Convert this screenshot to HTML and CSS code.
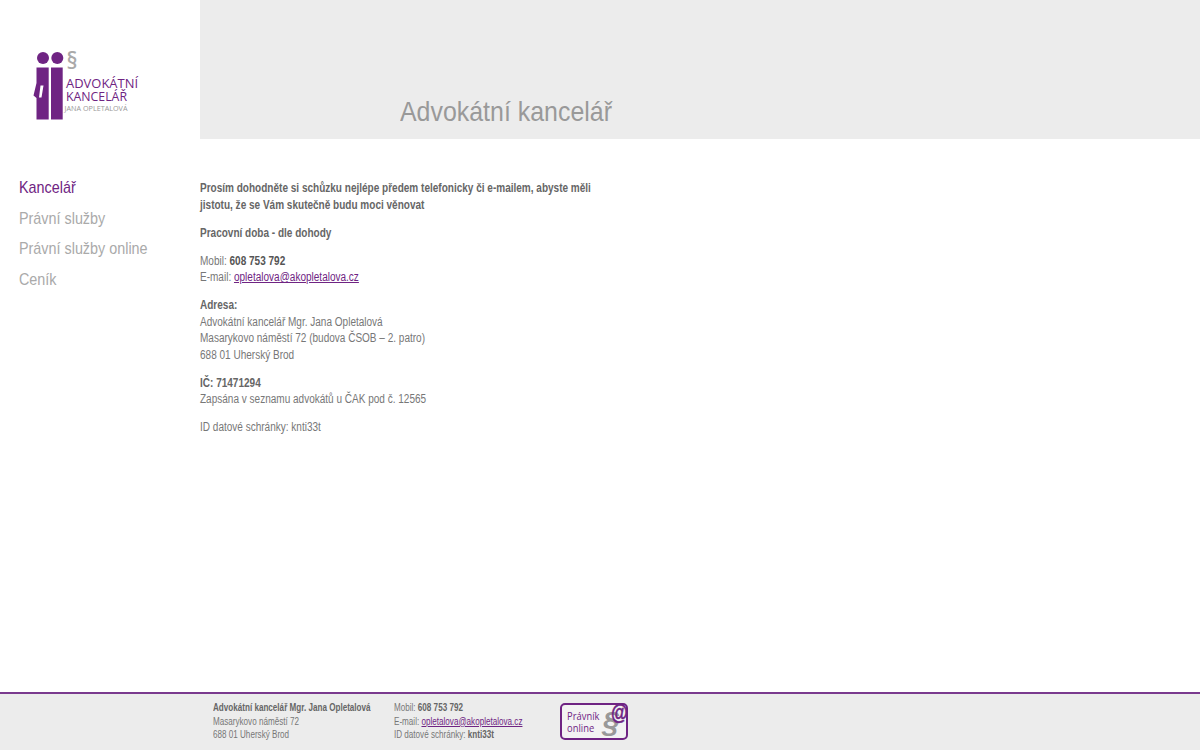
FILE: index.html
```html
<!DOCTYPE html>
<html>
<head>
<meta charset="UTF-8">
<title>Advokátní kancelář</title>
<link rel="stylesheet" href="styles.css">
</head>
<body>
<div class="page">
	<div class="header">
		<div class="logo">
			<svg width="200" height="139" viewBox="0 0 200 139">
				<circle cx="43" cy="58" r="6" fill="#6f2483"/>
				<circle cx="57.3" cy="58" r="6" fill="#6f2483"/>
				<path d="M36.5 67.5H48.7V119.5H36.5V98L33.5 95.5L36.5 83Z" fill="#6f2483"/>
				<path d="M51 67.5H62.7V119.5H51Z" fill="#6f2483"/>
				<path d="M40.5 85.5H43.5L41.5 97.5H39Z" fill="#fff"/>
				<text x="66.5" y="69" class="logo-par" textLength="11" lengthAdjust="spacingAndGlyphs">§</text>
				<text x="66" y="87.5" class="logo-line" textLength="72" lengthAdjust="spacingAndGlyphs">ADVOKÁTNÍ</text>
				<text x="66" y="101" class="logo-line" textLength="61" lengthAdjust="spacingAndGlyphs">KANCELÁŘ</text>
				<text x="64.5" y="111" class="logo-name" textLength="63" lengthAdjust="spacingAndGlyphs">JANA OPLETALOVÁ</text>
			</svg>
		</div>
		<div class="band">
			<h1>Advokátní kancelář</h1>
		</div>
	</div>
	<div class="main">
		<ul class="menu">
			<li><a class="active" href="#">Kancelář</a></li>
			<li><a href="#">Právní služby</a></li>
			<li><a href="#">Právní služby online</a></li>
			<li><a href="#">Ceník</a></li>
		</ul>
		<div class="content">
			<p><b>Prosím dohodněte si schůzku nejlépe předem telefonicky či e-mailem, abyste měli jistotu, že se Vám skutečně budu moci věnovat</b></p>
			<p><b>Pracovní doba - dle dohody</b></p>
			<p>Mobil: <b class="dark">608 753 792</b><br>E-mail: <a href="#">opletalova@akopletalova.cz</a></p>
			<p><b>Adresa:</b><br>Advokátní kancelář Mgr. Jana Opletalová<br>Masarykovo náměstí 72 (budova ČSOB – 2. patro)<br>688 01 Uherský Brod</p>
			<p><b>IČ: 71471294</b><br>Zapsána v seznamu advokátů u ČAK pod č. 12565</p>
			<p>ID datové schránky: knti33t</p>
		</div>
	</div>
	<div class="footer">
		<div class="foot-col foot-addr">
			<b>Advokátní kancelář Mgr. Jana Opletalová</b><br>Masarykovo náměstí 72<br>688 01 Uherský Brod
		</div>
		<div class="foot-col foot-contact">
			Mobil: <b>608 753 792</b><br>E-mail: <a href="#">opletalova@akopletalova.cz</a><br>ID datové schránky: <b>knti33t</b>
		</div>
		<div class="badge">
			<div class="badge-text">Právník<br>online</div>
			<span class="badge-par">§</span>
			<span class="badge-at">@</span>
		</div>
	</div>
</div>
</body>
</html>
```

FILE: styles.css
```css
html, body {
	margin: 0;
	padding: 0;
}

body {
	font-family: "Liberation Sans", Arial, sans-serif;
	font-size: 12px;
	color: #777;
	background: #fff;
}

.page {
	display: flex;
	flex-direction: column;
	height: 750px;
	overflow: hidden;
}

.header {
	display: flex;
	height: 139px;
}

.logo {
	width: 200px;
}

.logo svg {
	display: block;
}

.logo-par {
	font-family: "Open Sans", sans-serif;
	font-size: 24px;
	font-weight: 600;
	fill: #aaa;
}

.logo-line {
	font-family: "Open Sans", sans-serif;
	font-size: 13px;
	font-weight: 500;
	fill: #6f2483;
}

.logo-name {
	font-family: "Open Sans", sans-serif;
	font-size: 8px;
	fill: #999;
}

.band {
	flex: 1;
	background: #ececec;
	display: flex;
	align-items: flex-end;
	padding-left: 200px;
}

.band h1 {
	margin: 0 0 12px;
	font-size: 28px;
	line-height: 31px;
	font-weight: normal;
	color: #999;
	transform: scaleX(.89);
	transform-origin: left;
}

.main {
	flex: 1;
	display: flex;
}

.menu {
	width: 200px;
	box-sizing: border-box;
	list-style: none;
	margin: 0;
	padding: 34px 0 0 18.5px;
}

.menu li {
	height: 30.7px;
	line-height: 30.7px;
	font-size: 17px;
	transform: scaleX(.845);
	transform-origin: left;
}

.menu a {
	color: #aaa;
	text-decoration: none;
}

.menu a.active {
	color: #6f2483;
}

.content {
	width: 479px;
	padding-top: 33.2px;
	line-height: 16.5px;
	transform: scaleX(.835);
	transform-origin: left;
}

.content p {
	margin: 8px 0 11.5px;
}

.content b {
	color: #666;
}

.content a, .footer a {
	color: #6f2483;
}

.content .dark {
	color: #555;
}

.footer {
	height: 58px;
	box-sizing: border-box;
	border-top: 2px solid #7a3a8e;
	background: #ececec;
	display: flex;
	font-size: 10px;
	line-height: 13.5px;
	padding: 7px 0 0 212.5px;
}

.foot-col {
	flex: none;
	white-space: nowrap;
	transform: scaleX(.81);
	transform-origin: left;
}

.foot-col b {
	color: #666;
}

.foot-addr {
	width: 181px;
}

.foot-contact {
	width: 166.5px;
}

.badge {
	position: relative;
	flex: none;
	width: 64px;
	height: 33px;
	margin-top: 2px;
	border: 2px solid #6f2483;
	border-radius: 5px;
	background: #f3f3f3;
}

.badge-text {
	font-family: "Open Sans", sans-serif;
	font-size: 11px;
	line-height: 12px;
	color: #6f2483;
	padding: 5px 0 0 6px;
	transform: scaleX(.85);
	transform-origin: left;
}

.badge-par {
	position: absolute;
	right: 7px;
	top: 1px;
	font-size: 30px;
	line-height: 32px;
	font-style: italic;
	font-weight: bold;
	color: #999;
}

.badge-at {
	position: absolute;
	right: -1px;
	top: -2px;
	font-size: 22px;
	line-height: 20px;
	font-style: italic;
	font-weight: bold;
	color: #6f2483;
	-webkit-text-stroke: .5px #6f2483;
	transform: scaleX(.78);
	transform-origin: right;
}
```
